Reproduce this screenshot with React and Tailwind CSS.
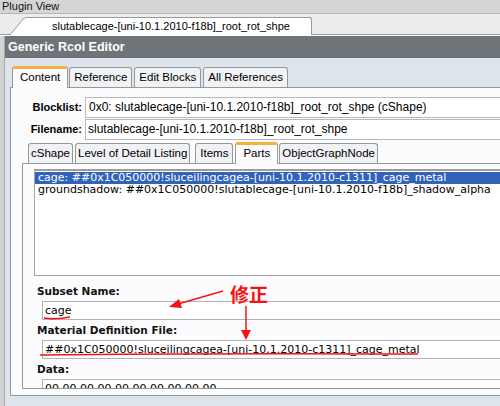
export default function App() {
  const tahoma = { fontFamily: '"Liberation Sans", Arial, sans-serif' };
  return (
    <div className="relative w-[500px] h-[406px] overflow-hidden bg-[#d6dde4] text-black" style={tahoma}>
      {/* plugin view title */}
      <div className="h-[14px] bg-[#d5d5d5] border-b border-[#b5b5b5] text-[11px] leading-[13px] pl-[2px] text-[#111]">
        Plugin View
      </div>

      {/* document tab strip */}
      <div className="h-[21px] bg-[#ececec] border-b border-[#9a9a9a] flex items-end pl-[10px]">
        <svg width="16" height="18" viewBox="0 0 16 18" className="block -mb-[1px]">
          <polygon points="0,18 14,1 16,1 16,18" fill="#ffffff" />
          <polyline points="0,18 14,1 16,1" fill="none" stroke="#9a9a9a" strokeWidth="1" />
        </svg>
        <div className="h-[18px] -mb-[1px] w-[286px] bg-white border-t border-r border-[#9a9a9a] rounded-tr-[3px] text-[11px] leading-[16px] pl-[26px]">
          slutablecage-[uni-10.1.2010-f18b]_root_rot_shpe
        </div>
      </div>
      <div className="h-[1px] bg-white" />

      <div className="flex h-[370px]">
        <div className="w-[5px] bg-[#d3d3d3] border-r border-[#a9a9a9]" />
        <div className="flex-1 flex flex-col">
          <div className="h-[22px] bg-[#6e7477] text-white font-bold text-[12.5px] leading-[22px] pl-[3px]">
            Generic Rcol Editor
          </div>
          <div className="flex-1 bg-[#dde4eb] pl-[5px] pt-[7px] flex flex-col">
            {/* outer tabs */}
            <div className="flex items-end h-[22px] pl-[2px] text-[11.5px]">
              <div className="h-[22px] px-[7px] bg-[#fcfcfe] border border-b-0 border-[#919b9c] border-t-[3px] border-t-[#f6b03c] rounded-t-[3px] leading-[17px] relative z-10 -mb-[1px]">
                Content
              </div>
              <div className="h-[20px] px-[4px] ml-[1px] bg-[#f0f2f5] border border-b-0 border-[#919b9c] rounded-t-[3px] leading-[19px]">Reference</div>
              <div className="h-[20px] px-[4px] ml-[2px] bg-[#f0f2f5] border border-b-0 border-[#919b9c] rounded-t-[3px] leading-[19px]">Edit Blocks</div>
              <div className="h-[20px] px-[4px] ml-[2px] bg-[#f0f2f5] border border-b-0 border-[#919b9c] rounded-t-[3px] leading-[19px]">All References</div>
            </div>
            <div className="h-[309px] -mr-[20px] bg-[#fbfbfc] border border-[#919b9c] pt-[9px] pl-[8px] pb-[6px] flex flex-col">
              <div className="flex items-center gap-[3px]">
                <div className="w-[63px] text-right font-bold text-[11px]">Blocklist:</div>
                <div className="flex-1 h-[21px] bg-white border border-[#b7babc] text-[12px] leading-[19px] pl-[3px]">
                  0x0: slutablecage-[uni-10.1.2010-f18b]_root_rot_shpe (cShape)
                </div>
              </div>
              <div className="flex items-center gap-[3px] mt-[1px]">
                <div className="w-[63px] text-right font-bold text-[11px]">Filename:</div>
                <div className="flex-1 h-[21px] bg-white border border-[#b7babc] text-[12px] leading-[19px] pl-[2px]">
                  slutablecage-[uni-10.1.2010-f18b]_root_rot_shpe
                </div>
              </div>

              {/* inner tabs */}
              <div className="flex items-end h-[22px] mt-[1px] pl-[9px] text-[11.5px]">
                <div className="h-[20px] px-[2px] bg-[#f0f2f5] border border-b-0 border-[#919b9c] rounded-t-[3px] leading-[19px]">cShape</div>
                <div className="h-[20px] px-[2px] ml-[2px] bg-[#f0f2f5] border border-b-0 border-[#919b9c] rounded-t-[3px] leading-[19px]">Level of Detail Listing</div>
                <div className="h-[20px] px-[4px] ml-[5px] bg-[#f0f2f5] border border-b-0 border-[#919b9c] rounded-t-[3px] leading-[19px]">Items</div>
                <div className="h-[22px] px-[7px] ml-[2px] bg-[#fcfcfe] border border-b-0 border-[#919b9c] border-t-[3px] border-t-[#f6b03c] rounded-t-[3px] leading-[17px] relative z-10 -mb-[1px]">Parts</div>
                <div className="h-[20px] px-[2px] ml-[1px] bg-[#f0f2f5] border border-b-0 border-[#919b9c] rounded-t-[3px] leading-[19px]">ObjectGraphNode</div>
              </div>
              <div className="flex-1 ml-[3px] bg-[#fcfcfe] border border-[#919b9c] pt-[5px] pl-[11px] overflow-hidden" style={{ fontFamily: '"DejaVu Sans", Verdana, sans-serif' }}>
                <div className="h-[107px] bg-white border border-[#a3a3a3] border-t-[2px] border-t-[#9c9c9c] pt-[1px] text-[11px] leading-[12px]">
                  <div className="bg-[#3163b8] text-white pl-[3px] whitespace-nowrap">cage: ##0x1C050000!sluceilingcagea-[uni-10.1.2010-c1311]_cage_metal</div>
                  <div className="pl-[3px] whitespace-nowrap">groundshadow: ##0x1C050000!slutablecage-[uni-10.1.2010-f18b]_shadow_alpha</div>
                </div>
                <div className="pl-[3px] mt-[8px] font-bold text-[10.5px] leading-[14px] text-[#111]">Subset Name:</div>
                <div className="ml-[8px] mt-[3px] h-[19px] bg-white border border-[#b3b3b3] text-[11px] leading-[17px] pl-[2px]">cage</div>
                <div className="pl-[3px] mt-[3px] font-bold text-[10.5px] leading-[14px] text-[#111]">Material Definition File:</div>
                <div className="ml-[8px] mt-[3px] h-[19px] bg-white border border-[#b3b3b3] text-[11px] leading-[17px] pl-[2px] whitespace-nowrap">##0x1C050000!sluceilingcagea-[uni-10.1.2010-c1311]_cage_metal</div>
                <div className="pl-[3px] mt-[3px] font-bold text-[10.5px] leading-[14px] text-[#111]">Data:</div>
                <div className="ml-[8px] mt-[3px] h-[19px] bg-white border border-[#b3b3b3] text-[11px] leading-[17px] pl-[2px] whitespace-nowrap">00 00 00 00 00 00 00 00 00 00</div>
              </div>
            </div>
          </div>
        </div>
      </div>

      {/* red annotations */}
      <div className="absolute left-[230px] top-[283px] text-[19px] font-bold leading-[22px] text-[#f21414]" style={{ fontFamily: '"Noto Sans CJK SC", sans-serif' }}>
        修正
      </div>
      <svg className="absolute left-0 top-0 pointer-events-none" width="500" height="406" viewBox="0 0 500 406">
        <line x1="223" y1="291" x2="178" y2="304" stroke="#f21414" strokeWidth="1.5" />
        <polygon points="169,307 179,299 182,308" fill="#f21414" />
        <line x1="246" y1="306" x2="246" y2="331" stroke="#f21414" strokeWidth="1.5" />
        <polygon points="241,330 251,330 246,340" fill="#f21414" />
        <path d="M44 318 Q56 320 70 317" stroke="#f21414" strokeWidth="1.5" fill="none" />
        <path d="M40 355 Q200 353 418 354" stroke="#f21414" strokeWidth="1.5" fill="none" />
      </svg>
    </div>
  );
}
